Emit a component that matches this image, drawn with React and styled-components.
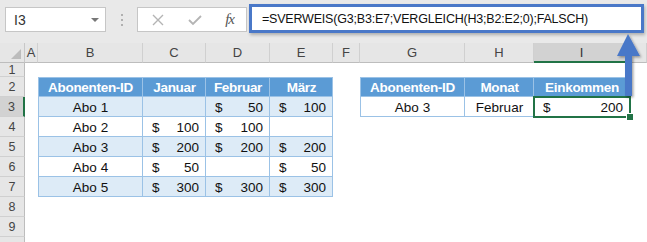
import styled, { createGlobalStyle } from "styled-components";

const GlobalStyle = createGlobalStyle`
  body {
    margin: 0;
    background: #fff;
    font-family: "Liberation Sans", Arial, sans-serif;
    overflow: hidden;
  }
`;

const COLS = ["A", "B", "C", "D", "E", "F", "G", "H", "I", ""];
const ROWS = [1, 2, 3, 4, 5, 6, 7, 8, 9, 10];

const subscribers = [
  ["Abo 1", null, 50, 100],
  ["Abo 2", 100, 100, null],
  ["Abo 3", 200, 200, 200],
  ["Abo 4", 50, null, 50],
  ["Abo 5", 300, 300, 300],
];

export default function App() {
  const cells = [];

  // column header row
  cells.push(
    <Corner key="corner">
      <CornerTri />
    </Corner>
  );
  COLS.forEach((c, i) =>
    cells.push(
      <ColHead key={"ch" + i} active={c === "I"}>
        {c}
      </ColHead>
    )
  );

  ROWS.forEach((r) => {
    // last row is only partly on screen, its number is hidden
    cells.push(
      <RowHead key={"rh" + r} active={r === 3}>
        {r < 10 ? r : ""}
      </RowHead>
    );
    COLS.forEach((c) => cells.push(renderCell(c, r)));
  });

  return (
    <>
      <GlobalStyle />
      <Page>
        <FormulaBar>
          <NameBox>
            <span>I3</span>
            <DropTri />
          </NameBox>
          <Dots>
            <i />
            <i />
            <i />
          </Dots>
          <FuncBox>
            <svg width="12" height="12" viewBox="0 0 12 12">
              <path d="M1 1L11 11M11 1L1 11" stroke="#b4b4b4" strokeWidth="1.4" />
            </svg>
            <svg width="14" height="12" viewBox="0 0 14 12">
              <path d="M1 6L5 10L13 2" stroke="#b4b4b4" strokeWidth="1.8" fill="none" />
            </svg>
            <Fx>fx</Fx>
          </FuncBox>
          <FormulaInput>=SVERWEIS(G3;B3:E7;VERGLEICH(H3;B2:E2;0);FALSCH)</FormulaInput>
        </FormulaBar>
        <Sheet>{cells}</Sheet>
        <Arrow width="647" height="242">
          <defs>
            <filter id="sh" x="-50%" y="-20%" width="200%" height="150%">
              <feDropShadow dx="1.5" dy="1.5" stdDeviation="1.2" floodColor="#000" floodOpacity="0.35" />
            </filter>
          </defs>
          <polygon
            points="628,34 640,56 632,56 632,96 625,96 625,56 617,56"
            fill="#4a78c8"
            filter="url(#sh)"
          />
        </Arrow>
      </Page>
    </>
  );
}

function renderCell(c, r) {
  const key = c + r;
  // first table B2:E7
  if (r >= 2 && r <= 7 && ["B", "C", "D", "E"].includes(c)) {
    const first = c === "B";
    if (r === 2) {
      const label = { B: "Abonenten-ID", C: "Januar", D: "Februar", E: "März" }[c];
      return (
        <TableCell key={key} kind="head" left={first} top>
          {label}
        </TableCell>
      );
    }
    const row = subscribers[r - 3];
    const kind = r % 2 === 1 ? "band" : "plain";
    if (first)
      return (
        <TableCell key={key} kind={kind} left>
          {row[0]}
        </TableCell>
      );
    const v = row["BCDE".indexOf(c)];
    return (
      <TableCell key={key} kind={kind} money>
        {v !== null && (
          <>
            <span>$</span>
            <span>{v}</span>
          </>
        )}
      </TableCell>
    );
  }
  // second table G2:I3
  if ((r === 2 || r === 3) && ["G", "H", "I"].includes(c)) {
    const first = c === "G";
    if (r === 2) {
      const label = { G: "Abonenten-ID", H: "Monat", I: "Einkommen" }[c];
      return (
        <TableCell key={key} kind="head" left={first} top>
          {label}
        </TableCell>
      );
    }
    if (c === "I")
      return (
        <TableCell key={key} kind="plain" money selected>
          <span>$</span>
          <span>200</span>
          <Handle />
        </TableCell>
      );
    return (
      <TableCell key={key} kind="plain" left={first}>
        {c === "G" ? "Abo 3" : "Februar"}
      </TableCell>
    );
  }
  return <Blank key={key} />;
}

const Page = styled.div`
  position: relative;
  width: 647px;
  height: 242px;
  overflow: hidden;
  background: #fff;
`;

const FormulaBar = styled.div`
  height: 43px;
  box-sizing: border-box;
  background: #e9e9e9;
  display: flex;
  align-items: flex-start;
  padding: 4px 3px 0 5px;
`;

const NameBox = styled.div`
  width: 101px;
  height: 25px;
  margin-top: 3px;
  box-sizing: border-box;
  background: #fff;
  border: 1px solid #c6c6c6;
  display: flex;
  align-items: center;
  justify-content: space-between;
  padding: 0 6px 0 8px;
  font-size: 14px;
  color: #333;
`;

const DropTri = styled.div`
  width: 0;
  height: 0;
  border-left: 4px solid transparent;
  border-right: 4px solid transparent;
  border-top: 4px solid #777;
`;

const Dots = styled.div`
  width: 31px;
  height: 25px;
  margin-top: 3px;
  display: flex;
  flex-direction: column;
  align-items: center;
  justify-content: center;
  gap: 3px;
  i {
    width: 2px;
    height: 2px;
    background: #b0b0b0;
  }
`;

const FuncBox = styled.div`
  width: 110px;
  height: 25px;
  margin-top: 3px;
  box-sizing: border-box;
  background: #fff;
  border: 1px solid #c6c6c6;
  display: flex;
  align-items: center;
  justify-content: space-between;
  padding: 0 12px 0 14px;
`;

const Fx = styled.span`
  font-family: "Liberation Serif", "Times New Roman", serif;
  font-style: italic;
  font-size: 15px;
  color: #555;
  letter-spacing: -1px;
`;

const FormulaInput = styled.div`
  margin-left: 2px;
  flex: 1;
  height: 29px;
  box-sizing: border-box;
  background: #fff;
  border: 3px solid #4a78c8;
  display: flex;
  align-items: center;
  padding-left: 10px;
  font-size: 12.5px;
  letter-spacing: -0.2px;
  color: #111;
  box-shadow: 1px 2px 3px rgba(0, 0, 0, 0.25);
`;

const Sheet = styled.div`
  display: grid;
  grid-template-columns: 25px 13px 105px 63px 64px 63px 27px 105px 69px 96px 1fr;
  grid-template-rows: 20px 14px repeat(9, 20px);
  font-size: 13.5px;
`;

const HeadBase = styled.div`
  box-sizing: border-box;
  display: flex;
  align-items: center;
  justify-content: center;
  color: #444;
  font-size: 13px;
  background: ${(p) => (p.active ? "#d2d2d2" : "#e6e6e6")};
`;

const Corner = styled(HeadBase)`
  position: relative;
  border-right: 1px solid #c8c8c8;
  border-bottom: 1px solid #bdbdbd;
`;

const CornerTri = styled.div`
  position: absolute;
  right: 3px;
  bottom: 3px;
  width: 0;
  height: 0;
  border-left: 10px solid transparent;
  border-bottom: 10px solid #bcbcbc;
`;

const ColHead = styled(HeadBase)`
  border-right: 1px solid #d0d0d0;
  border-bottom: ${(p) => (p.active ? "2px solid #217346" : "1px solid #bdbdbd")};
  color: ${(p) => (p.active ? "#333" : "#444")};
`;

const RowHead = styled(HeadBase)`
  border-bottom: 1px solid #d0d0d0;
  border-right: ${(p) => (p.active ? "2px solid #217346" : "1px solid #bdbdbd")};
  font-size: 12.5px;
`;

const Blank = styled.div`
  background: #fff;
`;

const tableBg = { head: "#5b9bd5", band: "#ddebf7", plain: "#fff" };

const TableCell = styled.div`
  position: relative;
  box-sizing: border-box;
  display: flex;
  align-items: center;
  justify-content: ${(p) => (p.money ? "space-between" : "center")};
  padding: ${(p) => (p.money ? "0 7px 0 9px" : "0 2px")};
  background: ${(p) => tableBg[p.kind]};
  color: ${(p) => (p.kind === "head" ? "#fff" : "#111")};
  font-weight: ${(p) => (p.kind === "head" ? 700 : 400)};
  letter-spacing: ${(p) => (p.kind === "head" ? "-0.3px" : "0")};
  white-space: nowrap;
  box-shadow: inset -1px -1px 0 #9bc2e6
    ${(p) => (p.left ? ", inset 1px 0 0 #9bc2e6" : "")}
    ${(p) => (p.top ? ", inset 0 1px 0 #9bc2e6" : "")};
  ${(p) =>
    p.selected &&
    `
    &::after {
      content: "";
      position: absolute;
      inset: -1px -1px -1px -1px;
      border: 2px solid #217346;
    }
  `}
`;

const Handle = styled.div`
  position: absolute;
  right: -4px;
  bottom: -4px;
  width: 6px;
  height: 6px;
  background: #217346;
  border: 1px solid #fff;
  z-index: 2;
`;

const Arrow = styled.svg`
  position: absolute;
  left: 0;
  top: 0;
  pointer-events: none;
`;
